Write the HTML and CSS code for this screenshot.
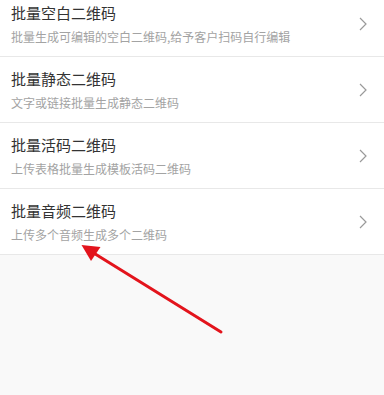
FILE: index.html
```html
<!DOCTYPE html>
<html lang="zh">
<head>
<meta charset="utf-8">
<link rel="stylesheet" href="styles.css">
</head>
<body>
<div class="page">
  <ul class="list">
    <li class="item">
      <div class="text">
        <div class="title">批量空白二维码</div>
        <div class="sub">批量生成可编辑的空白二维码,给予客户扫码自行编辑</div>
      </div>
      <svg class="chev" width="8" height="14" viewBox="0 0 8 14"><path d="M1 1 L7 7 L1 13" fill="none" stroke="#9a9a9a" stroke-width="1.2"/></svg>
    </li>
    <li class="item">
      <div class="text">
        <div class="title">批量静态二维码</div>
        <div class="sub">文字或链接批量生成静态二维码</div>
      </div>
      <svg class="chev" width="8" height="14" viewBox="0 0 8 14"><path d="M1 1 L7 7 L1 13" fill="none" stroke="#9a9a9a" stroke-width="1.2"/></svg>
    </li>
    <li class="item">
      <div class="text">
        <div class="title">批量活码二维码</div>
        <div class="sub">上传表格批量生成模板活码二维码</div>
      </div>
      <svg class="chev" width="8" height="14" viewBox="0 0 8 14"><path d="M1 1 L7 7 L1 13" fill="none" stroke="#9a9a9a" stroke-width="1.2"/></svg>
    </li>
    <li class="item">
      <div class="text">
        <div class="title">批量音频二维码</div>
        <div class="sub">上传多个音频生成多个二维码</div>
      </div>
      <svg class="chev" width="8" height="14" viewBox="0 0 8 14"><path d="M1 1 L7 7 L1 13" fill="none" stroke="#9a9a9a" stroke-width="1.2"/></svg>
    </li>
  </ul>
  <svg class="annot" width="384" height="395" viewBox="0 0 384 395">
    <line x1="221" y1="332" x2="92" y2="252" stroke="#e3141c" stroke-width="3" stroke-linecap="round"/>
    <polygon points="81.5,245 100.5,247 91,261" fill="#e3141c"/>
  </svg>
</div>
</body>
</html>
```
FILE: styles.css
```css
html, body {
  margin: 0;
  padding: 0;
  background: #f9f9f9;
}
.page {
  position: relative;
  width: 384px;
  height: 395px;
  overflow: hidden;
  font-family: "Noto Sans CJK SC", "Noto Sans", sans-serif;
}
.list {
  list-style: none;
  margin: -9px 0 0 0;
  padding: 0;
  background: #fff;
}
.item {
  display: flex;
  align-items: center;
  height: 65px;
  box-sizing: content-box;
  padding: 0 17px 0 11px;
  border-bottom: 1px solid #e8e8e8;
}
.text {
  flex: 1;
  display: flex;
  flex-direction: column;
  gap: 4px;
  padding-bottom: 0;
}
.title {
  font-size: 15px;
  line-height: 22px;
  color: #333;
}
.sub {
  font-size: 12px;
  line-height: 18px;
  color: #a3a3a3;
}
.chev {
  flex: none;
}
.annot {
  position: absolute;
  left: 0;
  top: 0;
  pointer-events: none;
}
```
